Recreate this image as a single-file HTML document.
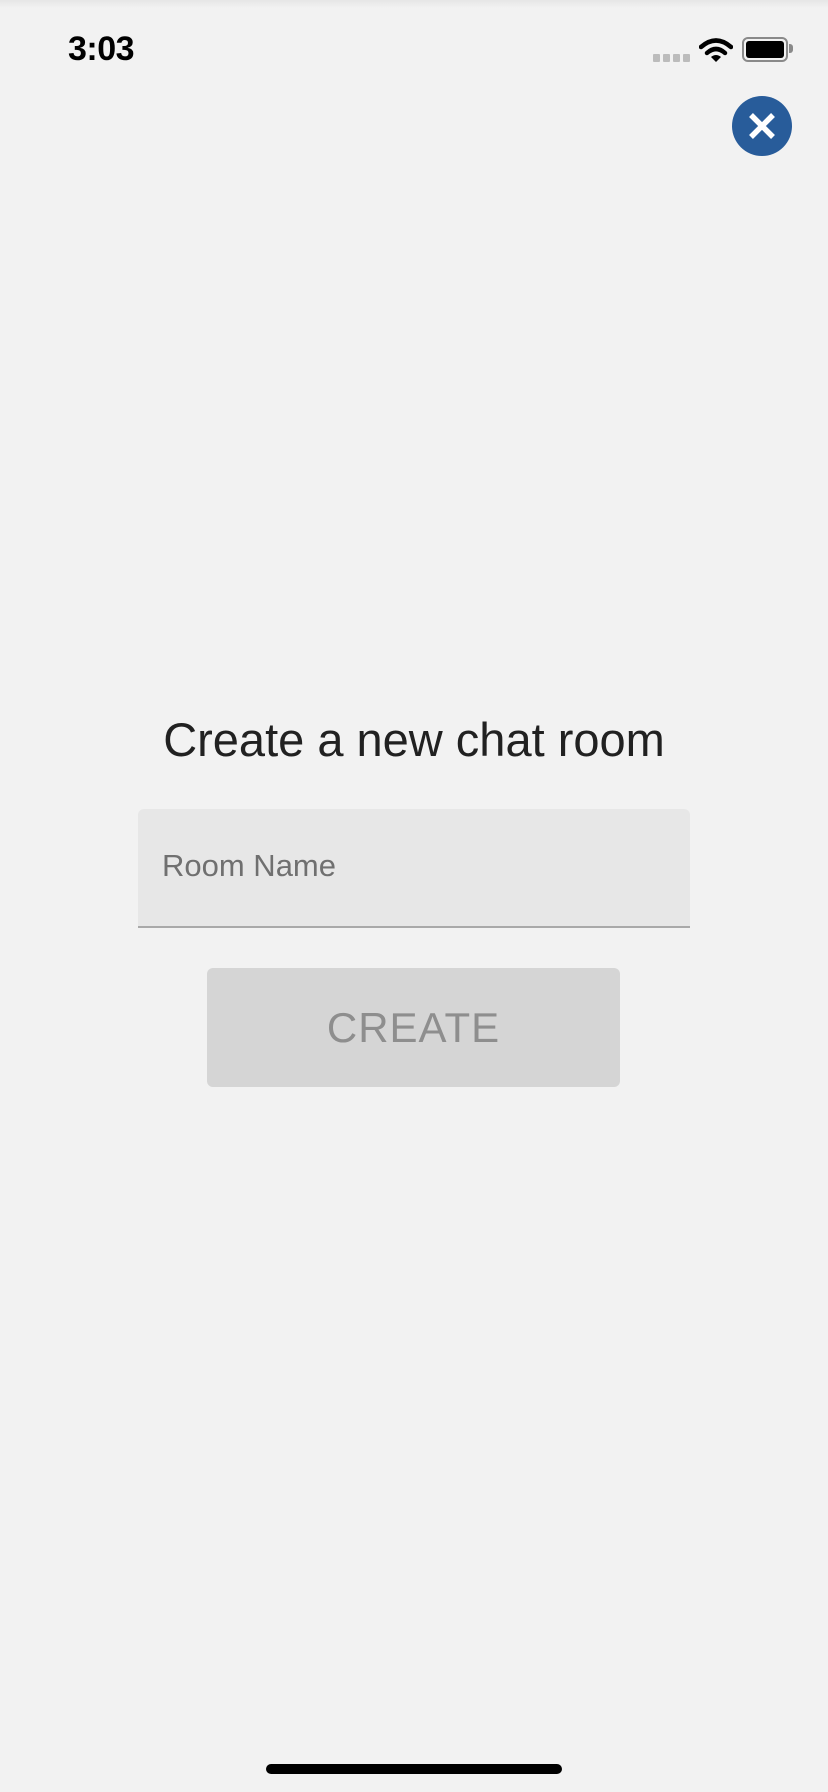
<!DOCTYPE html>
<html><head><meta charset="utf-8"><style>
html,body{margin:0;padding:0;}
body{width:828px;height:1792px;background:#f2f2f2;position:relative;overflow:hidden;font-family:"Liberation Sans",sans-serif;}
.a{position:absolute;}
</style></head><body>
<div class="a" style="left:0;top:0;width:828px;height:8px;background:linear-gradient(#e6e6e6,#f2f2f2);"></div>
<div class="a" style="left:68px;top:30px;font-size:34px;font-weight:bold;color:#000;letter-spacing:-0.5px;">3:03</div>
<div class="a" style="left:653px;top:54px;width:7px;height:8px;background:#bcbcbc;border-radius:1px;"></div>
<div class="a" style="left:663px;top:54px;width:7px;height:8px;background:#bcbcbc;border-radius:1px;"></div>
<div class="a" style="left:673px;top:54px;width:7px;height:8px;background:#bcbcbc;border-radius:1px;"></div>
<div class="a" style="left:683px;top:54px;width:7px;height:8px;background:#bcbcbc;border-radius:1px;"></div>
<svg class="a" style="left:699px;top:37px" width="34" height="26" viewBox="0 0 34 26">
<path d="M2 10 Q17 -3 32 10" stroke="#000" stroke-width="4.5" fill="none" stroke-linecap="round"/>
<path d="M8 16 Q17 8 26 16" stroke="#000" stroke-width="4.5" fill="none" stroke-linecap="round"/>
<path d="M12 20 L17 25 L22 20 Q17 16 12 20Z" fill="#000"/>
</svg>
<div class="a" style="left:742px;top:37px;width:42px;height:21px;border:2px solid #8a8a8a;border-radius:6px;"></div>
<div class="a" style="left:746px;top:41px;width:38px;height:17px;background:#000;border-radius:3px;"></div>
<div class="a" style="left:789px;top:44px;width:4px;height:9px;background:#8a8a8a;border-radius:0 3px 3px 0;"></div>
<svg class="a" style="left:732px;top:96px" width="60" height="60" viewBox="0 0 60 60">
<circle cx="30" cy="30" r="30" fill="#285c9a"/>
<path d="M19 19 L41 41 M41 19 L19 41" stroke="#fff" stroke-width="5.5" stroke-linecap="butt"/>
</svg>
<div class="a" style="left:0;width:828px;top:713px;text-align:center;font-size:47px;color:#212121;line-height:54px;">Create a new chat room</div>
<div class="a" style="left:138px;top:809px;width:552px;height:117px;background:#e7e7e7;border-radius:6px 6px 0 0;border-bottom:2px solid #a9a9a9;"></div>
<div class="a" style="left:162px;top:847px;font-size:31px;color:#707070;line-height:38px;">Room Name</div>
<div class="a" style="left:207px;top:968px;width:413px;height:119px;background:#d5d5d5;border-radius:6px;"></div>
<div class="a" style="left:207px;top:1004px;width:413px;text-align:center;font-size:42px;color:#8e8e8e;line-height:48px;letter-spacing:1px;">CREATE</div>
<div class="a" style="left:266px;top:1764px;width:296px;height:10px;background:#000;border-radius:5px;"></div>
</body></html>
